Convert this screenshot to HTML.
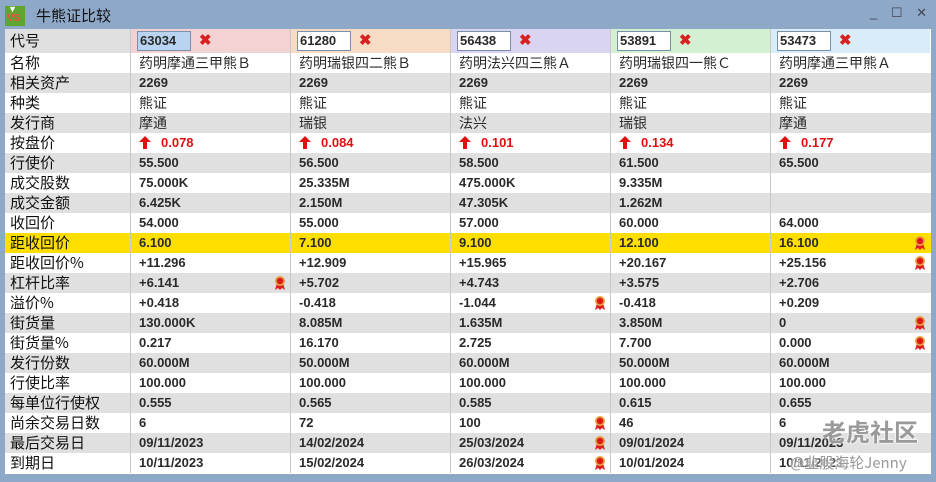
<!DOCTYPE html><html><head><meta charset="utf-8"><style>
body{margin:0;width:936px;height:482px;background:#8ea8c8;position:relative;overflow:hidden;font-family:"Liberation Sans","Noto Sans CJK SC",sans-serif}
.title{position:absolute;left:0;top:0;width:936px;height:29px;background:#8ea8c8}
.logo{position:absolute;left:5px;top:6px;width:20px;height:20px;background:#5fa630;color:#f33;font:bold 10px "Liberation Sans";}
.tt{position:absolute;left:36px;top:5px;font-size:15px;color:#111;font-family:"Noto Sans CJK SC",sans-serif}
.ctl{position:absolute;right:4px;top:5px;font-size:13px;color:#445;letter-spacing:5px}
.tbl{position:absolute;left:5px;top:29px;width:926px;height:445px;background:#fff}
.r{position:absolute;left:0;width:926px;height:20px}
.c{position:absolute;top:0;height:20px;border-left:1px solid #c8c8c8;box-sizing:border-box;line-height:20px;font-size:13px;font-weight:bold;color:#2a2a2a;padding-left:8px;white-space:nowrap}
.l{left:0;width:125px;border-left:none;font-weight:normal;font-size:15px;padding-left:5px;color:#111;font-family:"Noto Sans CJK SC",sans-serif}
.g{background:#e0e0e0}.y{background:#ffde00}
.n{font-weight:normal;font-size:14px;font-family:"Noto Sans CJK SC",sans-serif}
.red{color:#e01010}
.inp{display:inline-block;width:50px;height:18px;border:1px solid #7a8fa8;background:#fff;line-height:18px;padding-left:2px;vertical-align:middle;font-size:13px}
.x{color:#d82020;font-size:15px;margin-left:8px;vertical-align:middle}
.m{position:absolute;right:4px;top:2px}
.wm{position:absolute;color:#9a9a9a;font-family:'Noto Sans CJK SC',sans-serif;text-shadow:0 0 2px #fff,0 0 2px #fff}
</style></head><body>
<div class="title"><div class="logo"><span style="position:absolute;left:2px;top:7px;color:#f44">VS</span><span style="position:absolute;left:3px;top:-2px;color:#fff;font-size:9px">▼</span></div><div class="tt">牛熊证比较</div><div class="ctl">_ ☐ ✕</div></div>
<div class="tbl" id="t"></div>
<script>
var cols=[125,285,445,605,765];
var medal='<svg class="m" width="12" height="16" viewBox="0 0 12 16"><path d="M3 8 L1 15 L4 13 L6 15 L6 10Z M9 8 L11 15 L8 13 L6 15 L6 10Z" fill="#e02020"/><circle cx="6" cy="6" r="5" fill="#e8a040"/><circle cx="6" cy="6" r="3.2" fill="#e01818"/></svg>';
var arrow='<svg width="12" height="13" viewBox="0 0 12 13" style="vertical-align:-2px;margin-right:10px"><path d="M6 0 L12 6 L8 6 L8 13 L4 13 L4 6 L0 6Z" fill="#e01010"/></svg>';
var rows=[
["名称","n","药明摩通三甲熊Ｂ","药明瑞银四二熊Ｂ","药明法兴四三熊Ａ","药明瑞银四一熊Ｃ","药明摩通三甲熊Ａ"],
["相关资产","g","2269","2269","2269","2269","2269"],
["种类","n","熊证","熊证","熊证","熊证","熊证"],
["发行商","gn","摩通","瑞银","法兴","瑞银","摩通"],
["按盘价","a","0.078","0.084","0.101","0.134","0.177"],
["行使价","g","55.500","56.500","58.500","61.500","65.500"],
["成交股数","","75.000K","25.335M","475.000K","9.335M",""],
["成交金额","g","6.425K","2.150M","47.305K","1.262M",""],
["收回价","","54.000","55.000","57.000","60.000","64.000"],
["距收回价","y","6.100","7.100","9.100","12.100","16.100*"],
["距收回价%","","+11.296","+12.909","+15.965","+20.167","+25.156*"],
["杠杆比率","g","+6.141*","+5.702","+4.743","+3.575","+2.706"],
["溢价%","","+0.418","-0.418","-1.044*","-0.418","+0.209"],
["街货量","g","130.000K","8.085M","1.635M","3.850M","0*"],
["街货量%","","0.217","16.170","2.725","7.700","0.000*"],
["发行份数","g","60.000M","50.000M","60.000M","50.000M","60.000M"],
["行使比率","","100.000","100.000","100.000","100.000","100.000"],
["每单位行使权","g","0.555","0.565","0.585","0.615","0.655"],
["尚余交易日数","","6","72","100*","46","6"],
["最后交易日","g","09/11/2023","14/02/2024","25/03/2024*","09/01/2024","09/11/2023"],
["到期日","","10/11/2023","15/02/2024","26/03/2024*","10/01/2024","10/11/2023"]];
var h='<div class="r" style="top:0;height:24px"><div class="c l g" style="height:24px;line-height:24px">代号</div>';
var codes=["63034","61280","56438","53891","53473"],hc=["#f2d2d2","#f6dcc4","#d8d4f2","#d4f0d2","#d8edf8"];
for(var i=0;i<5;i++)h+='<div class="c" style="left:'+cols[i]+'px;width:160px;height:24px;line-height:22px;padding-left:6px;background:'+hc[i]+'"><span class="inp"'+(i==0?' style="background:#b8d4f0"':'')+'>'+codes[i]+'</span><span class="x">✖</span></div>';
h+='</div>';
rows.forEach(function(r,k){var top=24+k*20,cl=r[1];var bg=cl.indexOf('g')>=0?' g':cl=='y'?' y':'';
h+='<div class="r'+bg+'" style="top:'+top+'px"><div class="c l">'+r[0]+'</div>';
for(var i=0;i<5;i++){var v=r[i+2],m='';if(v.slice(-1)=='*'){v=v.slice(0,-1);m=medal;}
var cc=(cl.indexOf('n')>=0?' n':'');if(cl=='a'){v=arrow+'<span class="red">'+v+'</span>';}
h+='<div class="c'+cc+'" style="left:'+cols[i]+'px;width:160px">'+v+m+'</div>';}
h+='</div>';});
document.getElementById('t').innerHTML=h;
</script>
<div class="wm" style="left:822px;top:413px;font-size:24px;font-weight:bold">老虎社区</div>
<div class="wm" style="left:790px;top:452px;font-size:15px">@韭股海轮Jenny</div>
</body></html>
